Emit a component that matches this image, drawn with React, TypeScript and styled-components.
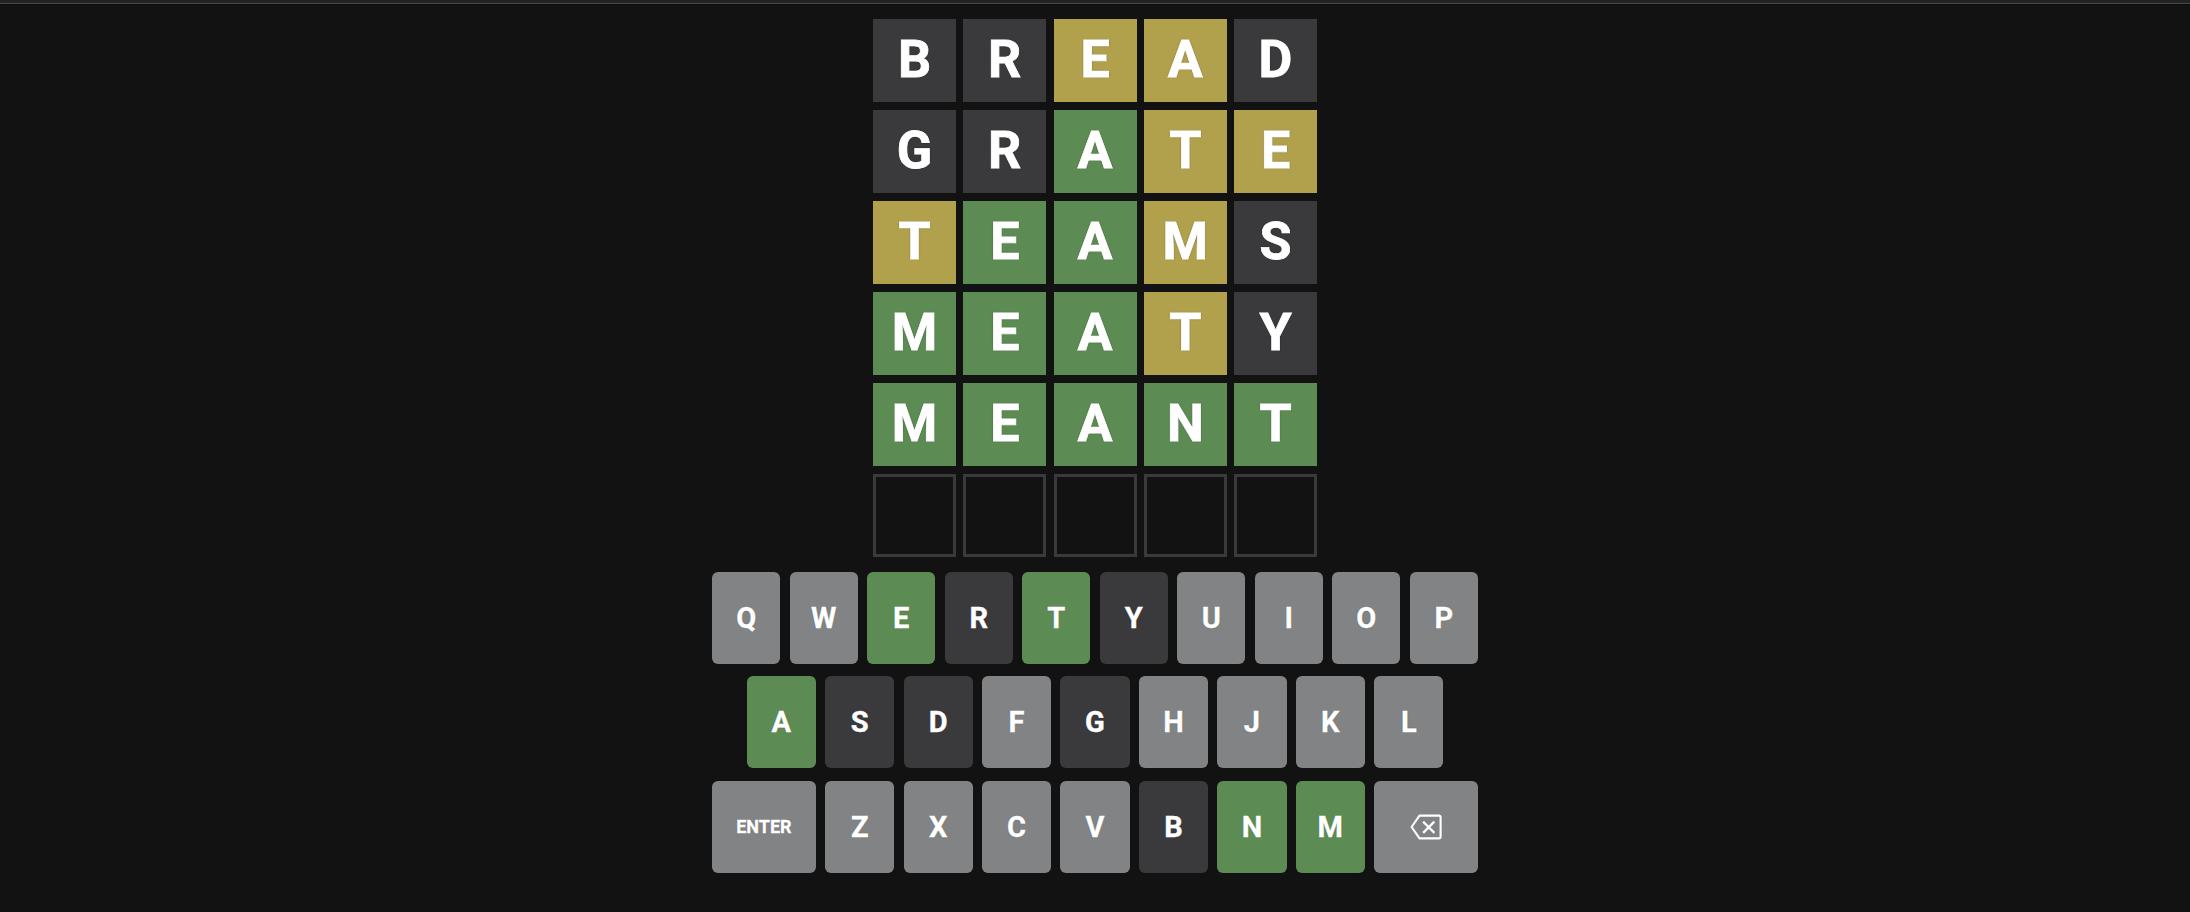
import React from "react";
import styled, { createGlobalStyle } from "styled-components";

const GlobalStyle = createGlobalStyle`
  html, body {
    margin: 0;
    padding: 0;
    background: #121213;
    height: 100%;
  }
  #root {
    min-height: 912px;
    background: #121213;
  }
  * { box-sizing: border-box; }
`;

type State = "absent" | "present" | "correct" | "empty" | "key";

const colors: Record<State, string> = {
  absent: "#3a3a3c",
  present: "#b1a04c",
  correct: "#5d8b54",
  empty: "transparent",
  key: "#818384",
};

const Page = styled.div`
  width: 100%;
  min-height: 912px;
  background: #121213;
  display: flex;
  flex-direction: column;
  align-items: center;
  font-family: Roboto, "Liberation Sans", Arial, sans-serif;
`;

const Header = styled.header`
  align-self: stretch;
  height: 4px;
  background: #232325;
  border-bottom: 1px solid #4a4a4c;
  box-shadow: 0 1px 0 #0a0a0a;
`;

const Board = styled.div`
  margin-top: 15px;
  display: grid;
  grid-template-columns: repeat(5, 83px);
  grid-auto-rows: 83px;
  column-gap: 7.25px;
  row-gap: 8px;
`;

const Tile = styled.div<{ $state: State }>`
  display: flex;
  align-items: center;
  justify-content: center;
  padding-bottom: 2px;
  background: ${(p) => colors[p.$state]};
  border: ${(p) => (p.$state === "empty" ? "3px solid #3a3a3c" : "none")};
  color: #ffffff;
  font-family: Roboto, "Liberation Sans", Arial, sans-serif;
  font-weight: 700;
  font-size: 52px;
  line-height: 1;
  text-transform: uppercase;
  -webkit-text-stroke: 0.8px #ffffff;
  text-shadow: 0 0 1.5px rgba(0, 0, 0, 0.7);
`;

const Keyboard = styled.div`
  margin-top: 15px;
  width: 766px;
  display: flex;
  flex-direction: column;
  gap: 12.3px;
`;

const KeyRow = styled.div`
  display: flex;
  width: 100%;
`;

const Spacer = styled.div`
  flex: 0.5;
`;

const Key = styled.button<{ $state: State; $wide?: boolean }>`
  flex: ${(p) => (p.$wide ? 1.5 : 1)};
  height: 92px;
  margin: 0 9.2px 0 0;
  padding: 0;
  border: 0;
  border-radius: 6px;
  background: ${(p) => colors[p.$state]};
  color: #ffffff;
  font-family: Roboto, "Liberation Sans", Arial, sans-serif;
  font-weight: 700;
  font-size: ${(p) => (p.$wide ? "18px" : "29px")};
  -webkit-text-stroke: 0.4px #ffffff;
  text-shadow: 0 0 1px rgba(0, 0, 0, 0.6);
  display: flex;
  align-items: center;
  justify-content: center;
  cursor: pointer;
  &:last-of-type {
    margin-right: 0;
  }
`;

const BackspaceIcon = () => (
  <svg width="32" height="26" viewBox="0 0 32 26" fill="none">
    <path
      d="M9.5 1.6 H29 Q30.6 1.6 30.6 3.2 V22.8 Q30.6 24.4 29 24.4 H9.5 L1.6 13 Z"
      stroke="#ffffff"
      strokeWidth="2.1"
      strokeLinejoin="round"
    />
    <path
      d="M14 8.5 L23.5 18 M23.5 8.5 L14 18"
      stroke="#ffffff"
      strokeWidth="2.4"
      strokeLinecap="square"
    />
  </svg>
);

const guesses: { word: string; states: State[] }[] = [
  { word: "BREAD", states: ["absent", "absent", "present", "present", "absent"] },
  { word: "GRATE", states: ["absent", "absent", "correct", "present", "present"] },
  { word: "TEAMS", states: ["present", "correct", "correct", "present", "absent"] },
  { word: "MEATY", states: ["correct", "correct", "correct", "present", "absent"] },
  { word: "MEANT", states: ["correct", "correct", "correct", "correct", "correct"] },
  { word: "     ", states: ["empty", "empty", "empty", "empty", "empty"] },
];

const keyStates: Record<string, State> = {
  E: "correct",
  T: "correct",
  A: "correct",
  N: "correct",
  M: "correct",
  R: "absent",
  Y: "absent",
  S: "absent",
  D: "absent",
  G: "absent",
  B: "absent",
};

const rows = ["QWERTYUIOP", "ASDFGHJKL", "ZXCVBNM"];

const stateOf = (k: string): State => keyStates[k] ?? "key";

export default function App() {
  return (
    <>
      <GlobalStyle />
      <Page>
        <Header />
        <Board>
          {guesses.map((g, r) =>
            g.states.map((s, c) => (
              <Tile key={`${r}-${c}`} $state={s}>
                {g.word[c].trim()}
              </Tile>
            ))
          )}
        </Board>
        <Keyboard>
          <KeyRow>
            {rows[0].split("").map((k) => (
              <Key key={k} $state={stateOf(k)}>
                {k}
              </Key>
            ))}
          </KeyRow>
          <KeyRow>
            <Spacer />
            {rows[1].split("").map((k) => (
              <Key key={k} $state={stateOf(k)}>
                {k}
              </Key>
            ))}
            <Spacer />
          </KeyRow>
          <KeyRow>
            <Key $state="key" $wide>
              ENTER
            </Key>
            {rows[2].split("").map((k) => (
              <Key key={k} $state={stateOf(k)}>
                {k}
              </Key>
            ))}
            <Key $state="key" $wide aria-label="backspace">
              <BackspaceIcon />
            </Key>
          </KeyRow>
        </Keyboard>
      </Page>
    </>
  );
}
